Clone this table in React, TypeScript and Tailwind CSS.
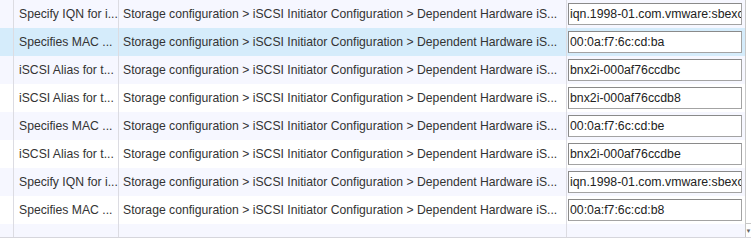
import React from 'react';

const rows = [
  { desc: 'Specify IQN for i...', value: 'iqn.1998-01.com.vmware:sbexc' },
  { desc: 'Specifies MAC ...', value: '00:0a:f7:6c:cd:ba' },
  { desc: 'iSCSI Alias for t...', value: 'bnx2i-000af76ccdbc' },
  { desc: 'iSCSI Alias for t...', value: 'bnx2i-000af76ccdb8' },
  { desc: 'Specifies MAC ...', value: '00:0a:f7:6c:cd:be' },
  { desc: 'iSCSI Alias for t...', value: 'bnx2i-000af76ccdbe' },
  { desc: 'Specify IQN for i...', value: 'iqn.1998-01.com.vmware:sbexc' },
  { desc: 'Specifies MAC ...', value: '00:0a:f7:6c:cd:b8' },
];

const path = 'Storage configuration > iSCSI Initiator Configuration > Dependent Hardware iS...';

function rowBg(i: number) {
  if (i === 1) return 'bg-[#d5ecfb]';
  return i % 2 === 0 ? 'bg-[#f6f7ff]' : 'bg-white';
}

export default function App() {
  return (
    <div className="w-[751px] h-[245px] bg-white overflow-hidden font-['Liberation_Sans',Arial,sans-serif] text-[12.2px] text-[#333]">
      <div className="flex border-b border-[#d6d6dc]">
        {/* Grid */}
        <div className="w-[745px]">
          {rows.map((r, i) => (
            <div key={i} className={`flex h-[28px] ${rowBg(i)}`}>
              <div className="w-[14px] border-r border-[#dcdce2]" />
              <div className="w-[105px] border-r border-[#dcdce2] pl-[5px] flex items-center whitespace-nowrap overflow-hidden">
                {r.desc}
              </div>
              <div className="w-[448px] border-r border-[#dcdce2] pl-[4px] flex items-center whitespace-nowrap overflow-hidden">
                {path}
              </div>
              <div className="flex-1 flex items-center pl-[1px] pr-[3px] min-w-0">
                <div className="w-full min-w-0 h-[22px] bg-white border border-[#a3a3a3] border-t-[#8a8a8a] border-l-[#8a8a8a] pl-[1px] flex items-center whitespace-nowrap overflow-hidden text-[12.3px] text-[#222]">
                  {r.value}
                </div>
              </div>
            </div>
          ))}
          <div className="flex h-[13px] bg-[#f6f7ff]">
            <div className="w-[14px] border-r border-[#dcdce2]" />
            <div className="w-[105px] border-r border-[#dcdce2]" />
            <div className="w-[448px] border-r border-[#dcdce2]" />
            <div className="flex-1" />
          </div>
        </div>
        {/* Scrollbar strip */}
        <div className="w-[6px] flex flex-col bg-white">
          <div className="flex-1 border-l border-[#c8c8c8]" />
          <div className="h-[14px] border-l border-t border-[#c8c8c8] flex items-center justify-center text-[6px] text-[#666] leading-none">
            ▼
          </div>
        </div>
      </div>
    </div>
  );
}
